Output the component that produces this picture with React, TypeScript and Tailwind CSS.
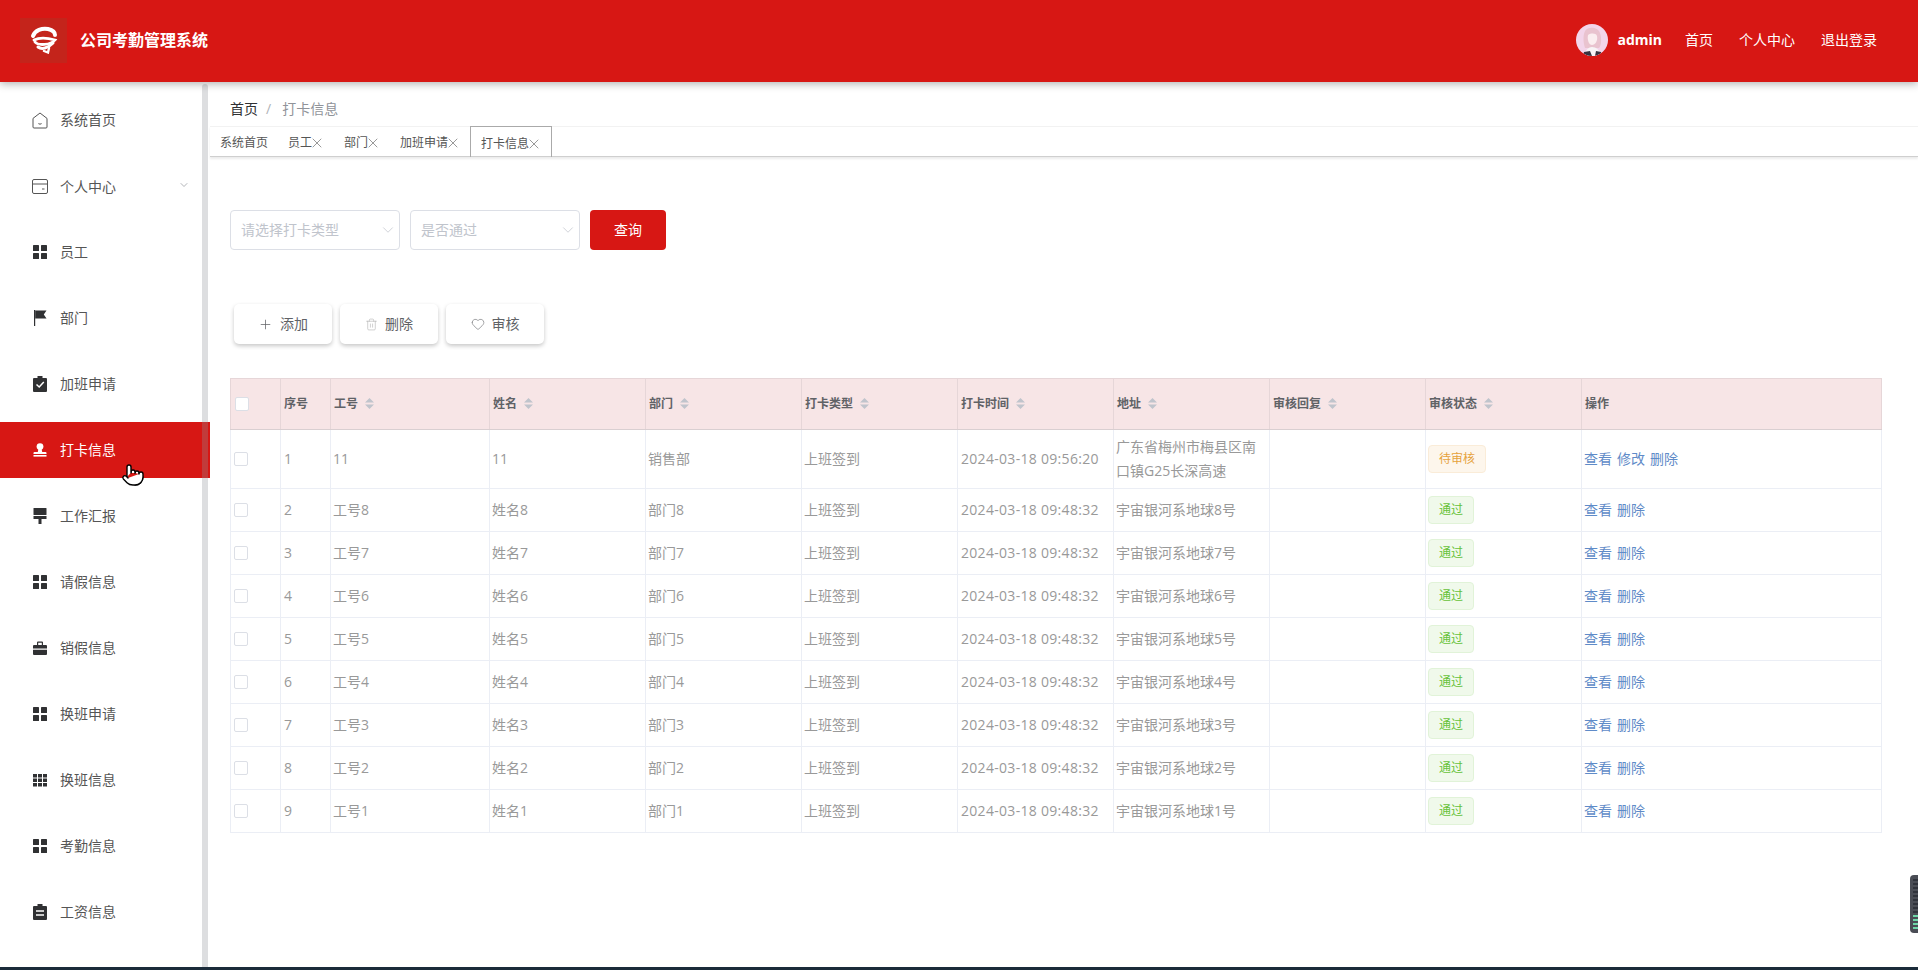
import type { ReactNode } from "react";
import { ChevronDown, Pointer, X, Plus, Trash2, Heart } from "lucide-react";

const Grid4 = () => (
  <svg viewBox="0 0 14 14" className="h-[14px] w-[14px]" fill="currentColor">
    <rect x="0" y="0" width="6" height="6" rx="0.6" />
    <rect x="8" y="0" width="6" height="6" rx="0.6" />
    <rect x="0" y="8" width="6" height="6" rx="0.6" />
    <rect x="8" y="8" width="6" height="6" rx="0.6" />
  </svg>
);

const Grid9 = () => (
  <svg viewBox="0 0 14 14" className="h-[14px] w-[14px]" fill="currentColor">
    {[0, 5, 10].map((x) =>
      [1, 5.5, 10].map((y) => <rect key={`${x}-${y}`} x={x} y={y} width="4" height="3.5" />)
    )}
  </svg>
);

const House = () => (
  <svg viewBox="0 0 16 17" className="h-[17px] w-4" fill="none" stroke="#555" strokeWidth="1">
    <path d="M8 1 L15 6.4 V15 a1 1 0 0 1-1 1 H2 a1 1 0 0 1-1-1 V6.4 Z" />
    <path d="M6.4 11.6 q1.6 1.2 3.2 0" />
  </svg>
);

const Wallet = () => (
  <svg viewBox="0 0 16 15" className="h-[15px] w-4" fill="none" stroke="#555" strokeWidth="1">
    <rect x="0.5" y="0.5" width="15" height="14" rx="1.5" />
    <path d="M0.5 5 H15.5" />
    <path d="M10 10 H12.5" />
  </svg>
);

const Flag = () => (
  <svg viewBox="0 0 14 16" className="h-4 w-[14px]" fill="currentColor">
    <rect x="1" y="0" width="1.2" height="16" />
    <path d="M2.2 0.5 H13.5 L10.8 4.5 L13.5 8.5 H2.2 Z" />
  </svg>
);

const Claim = () => (
  <svg viewBox="0 0 14 16" className="h-4 w-[14px]">
    <path fill="currentColor" d="M4.5 0 h5 v2 h3.5 a1 1 0 0 1 1 1 v12 a1 1 0 0 1-1 1 H1 a1 1 0 0 1-1-1 V3 a1 1 0 0 1 1-1 h3.5 Z" />
    <path fill="none" stroke="#fff" strokeWidth="1.5" d="M3.5 8.5 L6.2 11 L10.8 6" />
  </svg>
);

const Stamp = () => (
  <svg viewBox="0 0 14 14" className="h-[14px] w-[14px]" fill="currentColor">
    <circle cx="7" cy="3.6" r="3.4" />
    <path d="M5.4 6 h3.2 l0.6 3 h3.3 a1 1 0 0 1 1 1 v1 H0.5 v-1 a1 1 0 0 1 1-1 h3.3 Z" />
    <rect x="0.5" y="12" width="13" height="1.6" />
  </svg>
);

const Roller = () => (
  <svg viewBox="0 0 14 16" className="h-4 w-[14px]" fill="currentColor">
    <rect x="0.5" y="0" width="13" height="7" rx="0.6" />
    <rect x="0.5" y="8" width="13" height="3" />
    <rect x="5.5" y="11" width="3" height="5" />
  </svg>
);

const Briefcase = () => (
  <svg viewBox="0 0 14 14" className="h-[14px] w-[14px]" fill="currentColor">
    <path d="M4 4 V1.5 a1 1 0 0 1 1-1 h4 a1 1 0 0 1 1 1 V4 H8.8 V1.7 H5.2 V4 Z" />
    <path d="M0 5 a1 1 0 0 1 1-1 h12 a1 1 0 0 1 1 1 v2.6 H0 Z" />
    <path d="M0 8.8 h14 V13 a1 1 0 0 1-1 1 H1 a1 1 0 0 1-1-1 Z" />
  </svg>
);

const Order = () => (
  <svg viewBox="0 0 14 16" className="h-4 w-[14px]">
    <path fill="currentColor" d="M4.5 0 h5 v2 h3.5 a1 1 0 0 1 1 1 v12 a1 1 0 0 1-1 1 H1 a1 1 0 0 1-1-1 V3 a1 1 0 0 1 1-1 h3.5 Z" />
    <path fill="none" stroke="#fff" strokeWidth="1.4" d="M3 7 H11 M3 11 H11" />
  </svg>
);

const Logo = () => (
  <div className="flex h-[45px] w-[47px] items-center justify-center bg-[#c4241b]">
    <svg viewBox="0 0 28 28" className="h-7 w-7" fill="none" stroke="#fff" strokeLinecap="round">
      <path strokeWidth="4" d="M3 10 C5 4 12 2 18 3 C22 4 25 6 25 9" />
      <path strokeWidth="2.8" d="M4 14 C10 11 18 12 25 14 C21 19 8 20 5 16" />
      <path strokeWidth="3" d="M8 21 C12 24 18 22 23 17" />
      <path strokeWidth="2.4" d="M14 25 L18 26.5 L19 22" />
    </svg>
  </div>
);

const Avatar = () => (
  <svg viewBox="0 0 32 32" className="h-8 w-8 rounded-full">
    <rect width="32" height="32" fill="#f3d5ea" />
    <path fill="#e9c3cf" d="M9 7 C12 2 22 3 24 9 C26 15 25 22 23 24 L9 24 C7 18 7 11 9 7 Z" />
    <path fill="#fbeef0" d="M12 11 C15 9 20 9 21 12 C22 17 19 21 16 21 C13 21 11 16 12 11 Z" />
    <path fill="#f8f4f6" d="M8 32 C9 26 13 23 16 23 C20 23 24 26 25 32 Z" />
    <path fill="#3a3340" d="M8 28 L14 27 L16 32 L7 32 Z M20 27 L25 28 L25 32 L19 32 Z" />
  </svg>
);

const menu: { label: string; icon: ReactNode; arrow?: boolean; active?: boolean }[] = [
  { label: "系统首页", icon: <House /> },
  { label: "个人中心", icon: <Wallet />, arrow: true },
  { label: "员工", icon: <Grid4 /> },
  { label: "部门", icon: <Flag /> },
  { label: "加班申请", icon: <Claim /> },
  { label: "打卡信息", icon: <Stamp />, active: true },
  { label: "工作汇报", icon: <Roller /> },
  { label: "请假信息", icon: <Grid4 /> },
  { label: "销假信息", icon: <Briefcase /> },
  { label: "换班申请", icon: <Grid4 /> },
  { label: "换班信息", icon: <Grid9 /> },
  { label: "考勤信息", icon: <Grid4 /> },
  { label: "工资信息", icon: <Order /> },
];

const columns = ["工号", "姓名", "部门", "打卡类型", "打卡时间", "地址", "审核回复", "审核状态"];

const rows = [
  { no: "1", id: "11", name: "11", dept: "销售部", time: "2024-03-18 09:56:20", addr: "广东省梅州市梅县区南口镇G25长深高速", pending: true },
  ...[8, 7, 6, 5, 4, 3, 2, 1].map((n, i) => ({
    no: String(i + 2),
    id: `工号${n}`,
    name: `姓名${n}`,
    dept: `部门${n}`,
    time: "2024-03-18 09:48:32",
    addr: `宇宙银河系地球${n}号`,
    pending: false,
  })),
];

const Sort = () => (
  <svg viewBox="0 0 9 11" className="ml-[7px] inline-block h-[11px] w-[9px] align-[-1px]" fill="#c0c4cc">
    <path d="M4.5 0 L9 4.4 H0 Z" />
    <path d="M4.5 11 L9 6.6 H0 Z" />
  </svg>
);

const Select = ({ text }: { text: string }) => (
  <div className="flex h-10 w-[170px] items-center justify-between rounded border border-[#dcdfe6] bg-white pl-[10px] pr-[2px] text-sm text-[#c0c4cc]">
    <span>{text}</span>
    <ChevronDown size={18} strokeWidth={1} />
  </div>
);

const ActionButton = ({ icon, text }: { icon: ReactNode; text: string }) => (
  <button className="flex h-10 w-[98px] items-center justify-center gap-[7px] rounded-[5px] bg-white text-sm text-[#606266] shadow-[0_2px_4px_rgba(0,0,0,0.22)]">
    {icon}
    {text}
  </button>
);

const tabs = [
  { label: "系统首页", close: false },
  { label: "员工", close: true },
  { label: "部门", close: true },
  { label: "加班申请", close: true },
];

const CloseIcon = () => <X size={16} strokeWidth={1.5} className="-mx-[3px] text-[#999]" />;

export default function App() {
  return (
    <div className="flex h-[970px] flex-col overflow-hidden bg-white font-['Open_Sans','Noto_Sans_CJK_SC',sans-serif]">
      <header className="relative z-10 flex h-[82px] shrink-0 items-center justify-between bg-[#d71714] pb-[2px] pl-5 pr-[41px] shadow-[0_2px_8px_rgba(0,0,0,0.3)]">
        <div className="flex items-center gap-[13px]">
          <Logo />
          <span className="text-base font-bold text-white">公司考勤管理系统</span>
        </div>
        <div className="flex items-center text-sm text-white">
          <Avatar />
          <span className="ml-[9px] font-bold">admin</span>
          <a className="ml-[23px]">首页</a>
          <a className="ml-[26px]">个人中心</a>
          <a className="ml-[26px]">退出登录</a>
        </div>
      </header>

      <div className="flex min-h-0 flex-1">
        <aside className="relative w-[210px] shrink-0 pt-[10px] text-sm text-[#555]">
          {menu.map((item) => (
            <div
              key={item.label}
              className={`relative mb-[10px] flex h-14 items-center ${item.active ? "bg-[#d71714] text-white" : "text-[#303133]"}`}
            >
              <span className="flex w-[60px] justify-center pl-[25px] pr-[5px]">{item.icon}</span>
              <span className={`${item.active ? "text-white" : "text-[#555]"} ${item.arrow ? "pt-[2px]" : ""}`}>{item.label}</span>
              {item.arrow && (
                <ChevronDown size={12} strokeWidth={1.4} className="absolute left-[178px] top-[21px] text-[#909399]" />
              )}
              {item.active && (
                <Pointer
                  size={24}
                  strokeWidth={1.4}
                  fill="#fff"
                  className="absolute left-[121px] top-[41px] z-20 text-black"
                />
              )}
            </div>
          ))}
          <div className="absolute bottom-0 left-[202px] top-[2px] w-[6px] rounded-t bg-[rgba(144,147,153,0.3)]" />
        </aside>

        <main className="relative min-w-0 flex-1">
          <div className="flex h-11 items-center pl-5 pt-[10px] text-sm">
            <span className="text-[#303133]">首页</span>
            <span className="ml-2 mr-[11px] text-[#b0b3b8]">/</span>
            <span className="text-[#909399]">打卡信息</span>
          </div>

          <div className="flex h-[31px] border-b border-t border-b-[#cfcfcf] border-t-[#f2f2f2] text-xs text-[#555] shadow-[0_2px_2px_rgba(0,0,0,0.08)]">
            {tabs.map((t, i) => (
              <div key={t.label} className={`flex items-center px-[10px] pt-[3px] ${i === 0 ? "" : "mr-0.5"}`}>
                {t.label}
                {t.close && <CloseIcon />}
              </div>
            ))}
            <div className="-mb-px -mt-px flex items-center border border-b-0 border-[#aaa] pl-[10px] pr-3 pt-[3px]">
              打卡信息
              <CloseIcon />
            </div>
          </div>

          <div className="ml-5 mt-[53px] flex gap-[10px]">
            <Select text="请选择打卡类型" />
            <Select text="是否通过" />
            <button className="h-10 w-[76px] rounded bg-[#d71714] text-sm text-white">查询</button>
          </div>

          <div className="ml-6 mt-[54px] flex gap-2">
            <ActionButton icon={<Plus size={15} strokeWidth={1.2} />} text="添加" />
            <ActionButton icon={<Trash2 size={13} strokeWidth={1} className="text-[#aaa]" />} text="删除" />
            <ActionButton icon={<Heart size={14} strokeWidth={1} />} text="审核" />
          </div>

          <table className="ml-5 mt-[34px] w-[1652px] table-fixed border-collapse text-left">
            <colgroup>
              <col className="w-[50px]" />
              <col className="w-[50px]" />
              <col className="w-[159px]" />
              <col className="w-[156px]" />
              <col className="w-[156px]" />
              <col className="w-[156px]" />
              <col className="w-[156px]" />
              <col className="w-[156px]" />
              <col className="w-[156px]" />
              <col className="w-[156px]" />
              <col />
            </colgroup>
            <thead>
              <tr className="h-[51px] bg-[#f7e5e6] text-xs font-bold text-[#606266]">
                <th className="border border-[#e6d6d8] border-b-[#d9cfd1] pl-[4px]">
                  <span className="block h-[14px] w-[14px] rounded-[2px] border border-[#dcdfe6] bg-white" />
                </th>
                <th className="border border-[#e6d6d8] border-b-[#d9cfd1] pl-[3px]">序号</th>
                {columns.map((c) => (
                  <th key={c} className="border border-[#e6d6d8] border-b-[#d9cfd1] pl-[3px]">
                    {c}
                    <Sort />
                  </th>
                ))}
                <th className="border border-[#e6d6d8] border-b-[#d9cfd1] pl-[3px]">操作</th>
              </tr>
            </thead>
            <tbody className="text-sm leading-6 text-[#999]">
              {rows.map((r) => (
                <tr key={r.no} className={r.pending ? "h-[59px]" : "h-[43px]"}>
                  <td className="border border-[#ebeef5] pl-[3px]">
                    <span className="block h-[14px] w-[14px] rounded-[2px] border border-[#dcdfe6] bg-white" />
                  </td>
                  <td className="border border-[#ebeef5] pl-[3px]">{r.no}</td>
                  <td className="border border-[#ebeef5] pl-[2px]">{r.id}</td>
                  <td className="border border-[#ebeef5] pl-[2px]">{r.name}</td>
                  <td className="border border-[#ebeef5] pl-[2px]">{r.dept}</td>
                  <td className="border border-[#ebeef5] pl-[2px]">上班签到</td>
                  <td className="border border-[#ebeef5] pl-[3px] tracking-[0.3px]">{r.time}</td>
                  <td className="border border-[#ebeef5] px-[2px]">{r.addr}</td>
                  <td className="border border-[#ebeef5]" />
                  <td className="border border-[#ebeef5] pl-[2px]">
                    {r.pending ? (
                      <span className="inline-flex h-7 items-center rounded border border-[#faecd8] bg-[#fdf6ec] px-[10px] text-xs text-[#e6a23c]">
                        待审核
                      </span>
                    ) : (
                      <span className="inline-flex h-7 items-center rounded border border-[#e1f3d8] bg-[#f0f9eb] px-[10px] text-xs text-[#67c23a]">
                        通过
                      </span>
                    )}
                  </td>
                  <td className="border border-[#ebeef5] pl-[2px] text-[#5f8bc8]">
                    <span className="flex gap-[5px]">
                      <a>查看</a>
                      {r.pending && <a>修改</a>}
                      <a>删除</a>
                    </span>
                  </td>
                </tr>
              ))}
            </tbody>
          </table>

          <div className="absolute right-0 top-[793px] h-[58px] w-2 overflow-hidden rounded-l bg-[#4a4d55]">
            <svg viewBox="0 0 8 58" className="h-[58px] w-2">
              {[4, 8, 12, 16, 20, 24, 28, 32, 36].map((y) => (
                <rect key={y} x="3" y={y} width="5" height="2" fill="#30333b" />
              ))}
              {[40, 44, 48, 52].map((y) => (
                <rect key={y} x="3" y={y} width="5" height="2" fill="#6fd6a8" />
              ))}
            </svg>
          </div>
        </main>
      </div>
      <div className="h-[3px] shrink-0 bg-[#1b2b3a]" />
    </div>
  );
}
